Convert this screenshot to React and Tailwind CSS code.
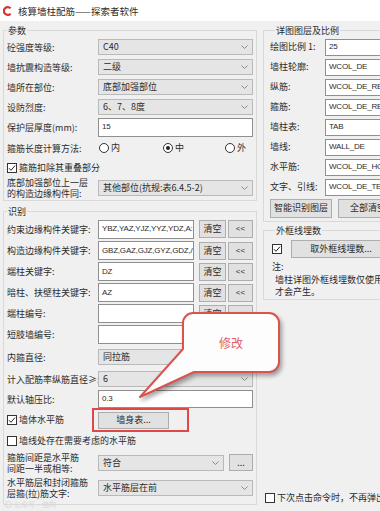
import React from "react";

const Chevron = () => (
  <svg width="7" height="4" viewBox="0 0 7 4" className="shrink-0">
    <path d="M0.5 0.5 L3.5 3.5 L6.5 0.5" fill="none" stroke="#8a8a8a" strokeWidth="1" />
  </svg>
);

const Select = ({ value, className = "w-[155px]" }) => (
  <div
    className={`flex h-[16px] items-center justify-between border border-[#b9b9b9] bg-[#e5e5e5] pl-[4px] pr-[4px] ${className}`}
  >
    <span className="truncate leading-[14px]">{value}</span>
    <Chevron />
  </div>
);

const Input = ({ value = "", className = "w-[155px] h-[19px]" }) => (
  <div
    className={`flex items-center overflow-hidden whitespace-nowrap border border-[#8f8f8f] bg-white pl-[3px] font-['Liberation_Sans',Arial,sans-serif] text-[8px] tracking-[-0.2px] ${className}`}
  >
    {value}
  </div>
);

const Btn = ({ children, className = "" }) => (
  <div
    className={`flex shrink-0 items-center justify-center whitespace-nowrap border border-[#adadad] bg-[#e1e1e1] ${className}`}
  >
    {children}
  </div>
);

const Check = ({ checked }) => (
  <span className="flex h-[10px] w-[10px] shrink-0 items-center justify-center border border-[#333] bg-white">
    {checked && (
      <svg width="8" height="8" viewBox="0 0 8 8">
        <path d="M1 4.2 L3 6.3 L7 1.6" fill="none" stroke="#222" strokeWidth="1" />
      </svg>
    )}
  </span>
);

const Radio = ({ checked }) => (
  <span className="flex h-[10px] w-[10px] shrink-0 items-center justify-center rounded-full border border-[#333] bg-white">
    {checked && <span className="h-[4px] w-[4px] rounded-full bg-[#222]" />}
  </span>
);

const Group = ({ title, className = "", children }) => (
  <div className={`border border-[#d9d9d9] ${className}`}>
    <div className="-mt-[6px] w-fit bg-[#f0f0f0] px-[1px] leading-[12px]">{title}</div>
    {children}
  </div>
);

// left column row: label + control
const Row = ({ label, h = "h-[20px]", children }) => (
  <div className={`flex items-center ${h}`}>
    <div className="w-[91px] shrink-0 whitespace-nowrap leading-[11px]">{label}</div>
    {children}
  </div>
);

const KeyRow = ({ label, value, h = "h-[21px]" }) => (
  <Row label={label} h={h}>
    <Input value={value} className="w-[96px] h-[19px]" />
    <Btn className="ml-[5px] h-[18px] w-[27px]">清空</Btn>
    <Btn className="ml-[2px] h-[18px] w-[25px] font-['Liberation_Sans',Arial,sans-serif] text-[8px]">&lt;&lt;</Btn>
  </Row>
);

// right column row
const RRow = ({ label, value }) => (
  <div className="flex h-[20px] items-center">
    <div className="w-[55px] shrink-0 whitespace-nowrap">{label}</div>
    <Input value={value} className="w-[80px] h-[17px]" />
  </div>
);

export default function App() {
  return (
    <div className="relative h-[511px] w-[380px] overflow-hidden bg-[#f0f0f0] font-['Noto_Sans_CJK_SC','Noto_Sans',sans-serif] text-[9px] text-[#2b2b2b]">
      {/* Title bar */}
      <div className="flex h-[21px] items-center gap-[6px] bg-white pl-[3px]">
        <svg width="9" height="10" viewBox="0 0 9 10">
          <path d="M7.6 2.3 A3.9 3.9 0 1 0 7.6 7.7" fill="none" stroke="#d8342c" strokeWidth="2.2" />
        </svg>
        <span className="text-[9.5px] leading-[12px]">核算墙柱配筋——探索者软件</span>
      </div>

      <div className="flex pt-[9px]">
        {/* Left column */}
        <div className="ml-[3px] w-[254px] shrink-0">
          <Group title="参数" className="pl-[3px] pr-[2px] pb-[1px]">
            <Row label="砼强度等级:">
              <Select value="C40" />
            </Row>
            <Row label="墙抗震构造等级:">
              <Select value="二级" />
            </Row>
            <Row label="墙所在部位:">
              <Select value="底部加强部位" />
            </Row>
            <Row label="设防烈度:">
              <Select value="6、7、8度" />
            </Row>
            <Row label="保护层厚度(mm):">
              <Input value="15" className="w-[155px] h-[19px]" />
            </Row>
            <Row label="箍筋长度计算方法:" h="h-[22px]">
              <div className="ml-[1px] flex items-center">
                <div className="flex w-[64px] items-center gap-[2px]">
                  <Radio />
                  <span>内</span>
                </div>
                <div className="flex w-[62px] items-center gap-[2px]">
                  <Radio checked />
                  <span>中</span>
                </div>
                <div className="flex items-center gap-[2px]">
                  <Radio />
                  <span>外</span>
                </div>
              </div>
            </Row>
            <div className="flex h-[18px] items-center gap-[2px]">
              <Check checked />
              <span>箍筋扣除其重叠部分</span>
            </div>
            <Row
              h="h-[22px]"
              label={
                <>
                  底部加强部位上一层
                  <br />
                  的构造边缘构件同:
                </>
              }
            >
              <Select value="其他部位(抗规:表6.4.5-2)" />
            </Row>
          </Group>

          <Group title="识别" className="mt-[10px] pl-[3px] pr-[2px] pb-[3px]">
            <KeyRow label="约束边缘构件关键字:" value="YBZ,YAZ,YJZ,YYZ,YDZ,A:" h="h-[22px]" />
            <KeyRow label="构造边缘构件关键字:" value="GBZ,GAZ,GJZ,GYZ,GDZ,/" />
            <KeyRow label="端柱关键字:" value="DZ" />
            <KeyRow label="暗柱、扶壁柱关键字:" value="AZ" />
            <KeyRow label="端柱编号:" value="" />
            <KeyRow label="短肢墙编号:" value="" />
            <Row label="内箍直径:" h="h-[24px]">
              <Select value="同拉筋" />
            </Row>
            <Row label="计入配筋率纵筋直径≥:">
              <Select value="6" />
            </Row>
            <Row label="默认轴压比:">
              <Input value="0.3" className="w-[155px] h-[18px]" />
            </Row>
            <div className="flex h-[22px] items-center">
              <div className="flex w-[91px] shrink-0 items-center gap-[2px]">
                <Check checked />
                <span>墙体水平筋</span>
              </div>
              <Btn className="h-[17px] w-[71px]">墙身表...</Btn>
            </div>
            <div className="flex h-[19px] items-center gap-[2px]">
              <Check />
              <span>墙线处存在需要考虑的水平筋</span>
            </div>
            <Row
              h="h-[25px]"
              label={
                <>
                  箍筋间距是水平筋
                  <br />
                  间距一半或相等:
                </>
              }
            >
              <Select value="符合" className="w-[126px]" />
              <Btn className="ml-[5px] h-[17px] w-[24px]">...</Btn>
            </Row>
            <Row
              h="h-[26px]"
              label={
                <>
                  水平筋层和封闭箍筋
                  <br />
                  层箍(拉)筋文字:
                </>
              }
            >
              <Select value="水平筋层在前" />
            </Row>
          </Group>
        </div>

        {/* Right column */}
        <div className="ml-[6px] flex h-[481px] w-[140px] shrink-0 flex-col">
          <Group title="详图图层及比例" className="pl-[6px] pb-[2px] [&>div:first-child]:ml-[5px]">
            <RRow label="绘图比例 1:" value="25" />
            <RRow label="墙柱轮廓:" value="WCOL_DE" />
            <RRow label="纵筋:" value="WCOL_DE_REIN" />
            <RRow label="箍筋:" value="WCOL_DE_REIN_S" />
            <RRow label="墙柱表:" value="TAB" />
            <RRow label="墙线:" value="WALL_DE" />
            <RRow label="水平筋:" value="WCOL_DE_HORZ" />
            <RRow label="文字、引线:" value="WCOL_DE_TEXT" />
            <div className="flex h-[22px] items-center gap-[6px]">
              <Btn className="h-[19px] w-[62px]">智能识别图层</Btn>
              <Btn className="h-[19px] w-[60px]">全部清空</Btn>
            </div>
          </Group>

          <Group title="外框线埋数" className="mt-[8px] pl-[6px] pb-[1px] [&>div:first-child]:ml-[5px]">
            <div className="flex h-[24px] items-center">
              <span className="ml-[2px]">
                <Check checked />
              </span>
              <Btn className="ml-[9px] h-[18px] w-[100px]">取外框线埋数...</Btn>
            </div>
            <div className="pl-[2px] leading-[12px]">注:</div>
            <div className="mt-[1px] whitespace-nowrap pl-[5px] leading-[12px]">
              墙柱详图外框线埋数仅使用外框线时
              <br />
              才会产生。
            </div>
          </Group>

          <div className="mb-[7px] ml-[2px] mt-auto flex h-[12px] items-center gap-[2px] whitespace-nowrap">
            <Check />
            <span>下次点击命令时，不再弹出此对话框</span>
          </div>
        </div>
      </div>

      {/* annotation: red box round the button */}
      <div className="absolute left-[92px] top-[408px] h-[24px] w-[97px] border-2 border-[#e04848]" />

      {/* annotation: callout */}
      <div className="absolute left-[136px] top-[310px] h-[92px] w-[150px]">
        <svg
          width="150"
          height="92"
          viewBox="0 0 150 92"
          className="drop-shadow-[2px_3px_2px_rgba(0,0,0,0.35)]"
        >
          <path
            d="M57 3 H133 A10 10 0 0 1 143 13 V52 A10 10 0 0 1 133 62 H58 L4 87 L47 39 V13 A10 10 0 0 1 57 3 Z"
            fill="#fdfdfd"
            stroke="#d9534f"
            strokeWidth="2"
            strokeLinejoin="round"
          />
        </svg>
        <span className="absolute left-[83px] top-[25px] text-[12px] leading-[16px] text-[#e06262]">修改</span>
      </div>

      {/* faint watermark */}
      <div className="absolute left-[5px] top-[500px] flex items-center gap-[2px] text-[7px] leading-[9px] text-[#d8d8d8]">
        <span className="h-[7px] w-[7px] rounded-full border border-[#d8d8d8]" />
        <span>公众号·结构</span>
      </div>
    </div>
  );
}
